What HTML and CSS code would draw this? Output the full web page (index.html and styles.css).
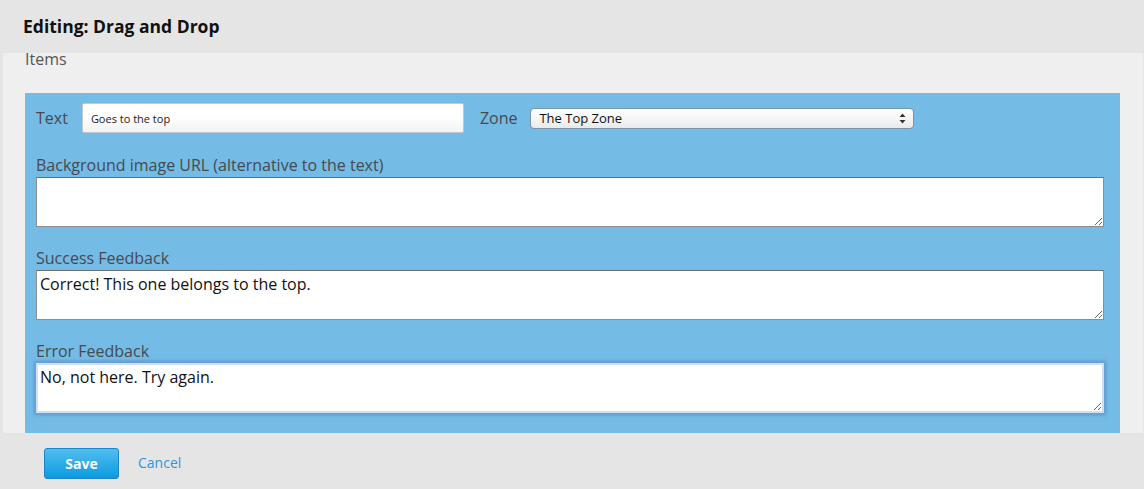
FILE: index.html
```html
<!DOCTYPE html>
<html>
<head>
<meta charset="utf-8">
<link rel="stylesheet" href="styles.css">
</head>
<body>
<div class="page">
  <header class="header"><h1 class="title">Editing: Drag and Drop</h1></header>
  <main class="content">
    <div class="section-label">Items</div>
    <div class="item-panel">
      <div class="row">
        <label class="label">Text</label>
        <input class="text-input" type="text" value="Goes to the top">
        <label class="label zone-label">Zone</label>
        <div class="select-wrap">
          <select class="select"><option>The Top Zone</option></select>
          <svg class="select-arrows" width="7" height="11" viewBox="0 0 7 11"><path d="M3.5 0.5 L6.5 4 L0.5 4 Z M0.5 7 L6.5 7 L3.5 10.5 Z" fill="#333"/></svg>
        </div>
      </div>
      <div class="field field-first">
        <label class="label">Background image URL (alternative to the text)</label>
        <textarea class="area"></textarea>
      </div>
      <div class="field">
        <label class="label">Success Feedback</label>
        <textarea class="area">Correct! This one belongs to the top.</textarea>
      </div>
      <div class="field">
        <label class="label">Error Feedback</label>
        <textarea class="area area-focus">No, not here. Try again.</textarea>
      </div>
    </div>
  </main>
  <footer class="footer">
    <button class="save-btn">Save</button>
    <a class="cancel" href="#">Cancel</a>
  </footer>
</div>
</body>
</html>
```
FILE: styles.css
```css
html, body {
  margin: 0;
  padding: 0;
  background: #e5e5e5;
  font-family: "Open Sans", "Liberation Sans", sans-serif;
}
.page {
  width: 1144px;
  height: 489px;
  display: flex;
  flex-direction: column;
  background: #e5e5e5;
}
.header {
  height: 53px;
  flex: none;
  display: flex;
  align-items: center;
  padding-left: 23px;
  box-sizing: border-box;
}
.title {
  margin: 0;
  font-size: 17.5px;
  font-weight: 700;
  color: #111;
  line-height: 24px;
  position: relative;
  top: -1px;
}
.content {
  height: 380px;
  flex: none;
  margin: 0 1px 0 3px;
  background: #efefef;
  padding: 0 23px 0 22px;
  box-sizing: border-box;
}
.section-label {
  font-size: 16px;
  line-height: 13px;
  color: #555;
}
.item-panel {
  margin-top: 27px;
  background: #74bbe5;
  padding: 10px 16px 20px 11px;
}
.row {
  display: flex;
  align-items: center;
  height: 30px;
}
.label {
  display: block;
  font-size: 16px;
  line-height: 20px;
  color: #474a4f;
}
.text-input {
  margin-left: 14px;
  width: 382px;
  height: 30px;
  box-sizing: border-box;
  border: 1px solid #c4c7cb;
  border-radius: 2px;
  background: linear-gradient(#ffffff, #ffffff 45%, #f3f3f3);
  font-family: "Open Sans", sans-serif;
  font-size: 11px;
  color: #222;
  padding: 0 8px;
}
.zone-label {
  margin-left: 16px;
}
.select-wrap {
  position: relative;
  margin-left: 13px;
}
.select {
  -webkit-appearance: none;
  appearance: none;
  width: 384px;
  height: 21px;
  box-sizing: border-box;
  border: 1px solid #7d93a8;
  border-radius: 4px;
  background: linear-gradient(#ffffff, #f4f4f4 60%, #e9e9e9);
  font-family: "Open Sans", sans-serif;
  font-size: 13px;
  color: #111;
  padding: 0 0 0 8px;
  line-height: 19px;
  display: block;
}
.select-arrows {
  position: absolute;
  right: 8px;
  top: 5px;
  pointer-events: none;
}
.field {
  margin-top: 21px;
}
.field-first {
  margin-top: 22px;
}
.area {
  display: block;
  margin-top: 2px;
  width: 1068px;
  height: 50px;
  box-sizing: border-box;
  border: 1px solid #8d8d8d;
  border-top-color: #6e6e6e;
  background: #fff;
  font-family: "Open Sans", sans-serif;
  font-size: 16px;
  line-height: 20px;
  color: #111;
  padding: 3px 3px;
  outline: none;
}
.area-focus {
  border: 2px solid #d2dff0;
  box-shadow: 0 0 0 1px #6aa2d8, 0 0 3px 2px #5b95d0;
  padding: 2px 2px;
}
.footer {
  flex: 1;
  display: flex;
  align-items: flex-start;
  padding: 15px 0 0 44px;
  box-sizing: border-box;
}
.save-btn {
  width: 75px;
  height: 31px;
  box-sizing: border-box;
  border: 1px solid #1a86c6;
  border-radius: 3px;
  background: linear-gradient(#52bef0, #0a9be2);
  color: #fff;
  font-family: "Open Sans", sans-serif;
  font-weight: 700;
  font-size: 14px;
  padding: 0;
}
.cancel {
  margin-left: 19px;
  font-size: 14px;
  line-height: 30px;
  color: #2f95d8;
  text-decoration: none;
}
```
